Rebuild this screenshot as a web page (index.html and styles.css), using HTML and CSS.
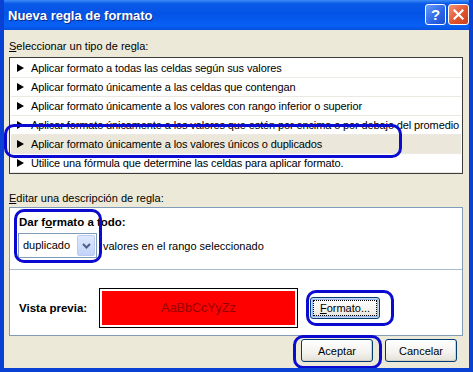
FILE: index.html
```html
<!DOCTYPE html>
<html lang="es">
<head>
    <meta charset="UTF-8">
    <title>Nueva regla de formato</title>
    <link rel="stylesheet" href="styles.css">
</head>
<body>

    <div class="window">
        <div class="titlebar">
            <span class="title">Nueva regla de formato</span>
            <div class="caption-buttons">
                <span class="cap-btn help">?</span>
                <span class="cap-btn close">
                    <svg width="11" height="11" viewBox="0 0 11 11"><path d="M1.5 1.5 L9.5 9.5 M9.5 1.5 L1.5 9.5" stroke="#fff" stroke-width="2.2" stroke-linecap="square"/></svg>
                </span>
            </div>
        </div>

        <div class="client">
            <div class="label"><u>S</u>eleccionar un tipo de regla:</div>
            <ul class="rule-list">
                <li>Aplicar formato a todas las celdas según sus valores</li>
                <li>Aplicar formato únicamente a las celdas que contengan</li>
                <li>Aplicar formato únicamente a los valores con rango inferior o superior</li>
                <li>Aplicar formato únicamente a los valores que estén por encima o por debajo del promedio</li>
                <li class="selected">Aplicar formato únicamente a los valores únicos o duplicados</li>
                <li>Utilice una fórmula que determine las celdas para aplicar formato.</li>
            </ul>

            <div class="label label-edit"><u>E</u>ditar una descripción de regla:</div>
            <div class="desc-panel">
                <div class="desc-top">
                    <div class="bold">Dar f<u>o</u>rmato a todo:</div>
                    <div class="combo-row">
                        <div class="combo">
                            <span class="combo-text">duplicado</span>
                            <span class="combo-btn">
                                <svg width="9" height="6" viewBox="0 0 9 6"><path d="M1 1 L4.5 4.5 L8 1" fill="none" stroke="#4d6185" stroke-width="2"/></svg>
                            </span>
                        </div>
                        <span>valores en el rango seleccionado</span>
                    </div>
                </div>
                <div class="desc-bottom">
                    <span class="bold preview-label">Vista previa:</span>
                    <div class="preview"><div class="preview-fill">AaBbCcYyZz</div></div>
                    <button class="btn btn-format"><u>F</u>ormato...</button>
                </div>
            </div>

            <div class="actions">
                <button class="btn">Aceptar</button>
                <button class="btn">Cancelar</button>
            </div>
        </div>

        <!-- hand-drawn highlight rings -->
        <div class="mark mark-rule"></div>
        <div class="mark mark-format"></div>
        <div class="mark mark-button"></div>
        <div class="mark mark-ok"></div>
    </div>

</body>
</html>
```

FILE: styles.css
```css
body { margin: 0; font-family: "Liberation Sans", Arial, sans-serif; font-size: 11px; color: #000; }

/* XP style dialog frame */
.window {
    position: relative;
    width: 473px;
    height: 372px;
    box-sizing: border-box;
    background: #ece9d8;
    border: 4px solid #0841d4;
    border-top: none;
    overflow: hidden;
}

.titlebar {
    height: 30px;
    margin: 0 -4px;
    padding: 0 4px 0 8px;
    display: flex;
    align-items: center;
    justify-content: space-between;
    background: linear-gradient(#3d8cf7 0%, #0a5ae8 12%, #0453e6 45%, #0860f5 85%, #0650dd 100%);
}
.title {
    color: #fff;
    font-size: 13px;
    font-weight: bold;
    text-shadow: 1px 1px #0a2a8a;
    padding-top: 1px;
}

.caption-buttons { display: flex; gap: 2px; margin-top: -1px; }
.cap-btn {
    width: 19px;
    height: 19px;
    border: 1px solid #fff;
    border-radius: 3px;
    display: flex;
    align-items: center;
    justify-content: center;
    color: #fff;
    font-weight: bold;
    font-size: 15px;
}
.cap-btn.help { background: linear-gradient(135deg, #6a9cf8, #2a64e6 60%, #1d4fd0); }
.cap-btn.close { background: linear-gradient(135deg, #f0967a, #e2532d 55%, #c8401d); }

.client { padding: 9px 6px 5px 5px; }
.label { line-height: 14px; margin-bottom: 4px; }
.label-edit { margin-top: 17px; margin-bottom: 2px; }

.rule-list {
    list-style: none;
    margin: 0;
    padding: 1px 0 0;
    height: 117px;
    box-sizing: border-box;
    background: #fff;
    border: 1px solid #3b3b3b;
    overflow: hidden;
    letter-spacing: -0.12px;
}
.rule-list li {
    height: 19px;
    line-height: 18px;
    padding-left: 20px;
    margin: 0 1px;
    border-bottom: 1px solid #ebe9e1;
    box-sizing: border-box;
    position: relative;
    white-space: nowrap;
}
.rule-list li::before {
    content: "";
    position: absolute;
    left: 6px;
    top: 5px;
    border-left: 7px solid #000;
    border-top: 4px solid transparent;
    border-bottom: 4px solid transparent;
}
.rule-list li.selected { background: #ebe8db; }

.desc-panel {
    background: #fff;
    border: 1px solid #7f9db9;
}
.desc-top {
    height: 62px;
    padding: 7px 0 0 9px;
    box-sizing: border-box;
    border-bottom: 1px solid #aabdd0;
}
.bold { font-weight: bold; font-size: 11.5px; line-height: 14px; }

.combo-row { display: flex; align-items: center; gap: 6px; margin: 4px 0 0 -1px; }
.combo {
    width: 79px;
    height: 25px;
    box-sizing: border-box;
    border: 1px solid #7f9db9;
    padding: 1px;
    display: flex;
    justify-content: space-between;
}
.combo-text { padding: 4px 0 0 3px; }
.combo-btn {
    width: 18px;
    box-sizing: border-box;
    border: 1px solid #b9cbf3;
    border-radius: 2px;
    background: linear-gradient(#dfe8fd, #c1d3fb);
    display: flex;
    align-items: center;
    justify-content: center;
}

.desc-bottom {
    height: 65px;
    box-sizing: border-box;
    padding: 18px 0 7px 9px;
    display: flex;
    align-items: center;
}
.preview-label { width: 80px; }
.preview {
    width: 199px;
    height: 40px;
    box-sizing: border-box;
    border: 1px solid #000;
    padding: 2px;
}
.preview-fill {
    height: 100%;
    background: #ff0000;
    color: #920000;
    font-size: 12.5px;
    display: flex;
    align-items: center;
    justify-content: center;
}

.btn {
    font-family: inherit;
    font-size: 11px;
    color: #000;
    height: 23px;
    padding: 0;
    border: 1px solid #003c74;
    border-radius: 3px;
    background: linear-gradient(#ffffff, #f3f2ee 60%, #e3e1d6);
    box-shadow: inset -1px -1px 0 #d6d0c5;
}
.btn-format {
    width: 70px;
    height: 22px;
    margin-left: 12px;
    box-shadow: inset 0 0 0 1px #c6d6f5, inset 0 0 0 2px #9ab9ef;
    outline: 1px dotted #000;
    outline-offset: -4px;
}

.actions { display: flex; justify-content: flex-end; gap: 12px; margin: 3px 6px 0 0; }
.actions .btn { width: 72px; }

/* blue annotation rings drawn over the dialog */
.mark {
    position: absolute;
    border: 3px solid #0a0ad0;
    border-radius: 10px;
}
.mark-rule { left: 0; top: 124px; width: 392px; height: 28px; }
.mark-format { left: 10px; top: 209px; width: 82px; height: 48px; }
.mark-button { left: 302px; top: 290px; width: 82px; height: 30px; }
.mark-ok { left: 289px; top: 335px; width: 83px; height: 28px; }
```
